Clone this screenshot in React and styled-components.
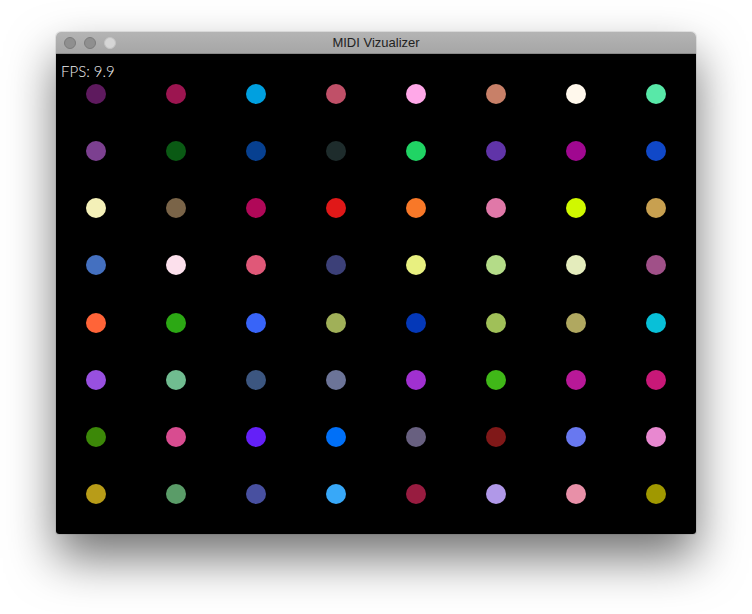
import React from 'react'
import styled, { createGlobalStyle } from 'styled-components'

const colors = [
  ['#5e1a5e', '#9c1550', '#00a0e0', '#c05068', '#ffa8e8', '#c88068', '#fff8ec', '#58e8a8'],
  ['#7c4090', '#0a5a14', '#074090', '#1e2c2c', '#20d464', '#6034a8', '#a00890', '#1048c8'],
  ['#f4f0b8', '#7a6448', '#b00858', '#e01818', '#f87828', '#e078a8', '#d0f800', '#c8a050'],
  ['#4470c0', '#fce0ec', '#e05878', '#3c4078', '#e8f080', '#b4dc88', '#e4ecbc', '#a05088'],
  ['#ff6438', '#2ca814', '#3864f8', '#a0b058', '#0438b8', '#a0c058', '#b0a860', '#08c0d8'],
  ['#9850e0', '#70bc90', '#3c5680', '#6c7498', '#a030d0', '#40b818', '#b81898', '#c81878'],
  ['#3c8808', '#d84c90', '#6420f8', '#0070f8', '#686080', '#801818', '#6878f0', '#e888d0'],
  ['#b89c18', '#5a9c68', '#4850a0', '#38a8f8', '#981c40', '#b098e8', '#e890a8', '#a09800'],
]

const GlobalStyle = createGlobalStyle`
  body {
    margin: 0;
    background: #fff;
    font-family: "Liberation Sans", Arial, sans-serif;
  }
`

const Desktop = styled.div`
  padding: 32px 56px 80px;
`

const Window = styled.div`
  width: 640px;
  border-radius: 5px 5px 3px 3px;
  overflow: hidden;
  box-shadow: 0 24px 48px rgba(0, 0, 0, 0.55), 0 0 0 1px rgba(0, 0, 0, 0.08);
`

const TitleBar = styled.div`
  position: relative;
  height: 22px;
  display: flex;
  align-items: center;
  justify-content: center;
  background: linear-gradient(#b4b4b4, #a6a6a6);
  border-bottom: 1px solid #8a8a8a;
  box-sizing: border-box;
`

const Lights = styled.div`
  position: absolute;
  left: 8px;
  top: 5px;
  display: flex;
  gap: 8px;
`

const Light = styled.span`
  width: 12px;
  height: 12px;
  border-radius: 50%;
  box-sizing: border-box;
  background: ${p => (p.$dim ? '#d6d6d6' : '#8f8f8f')};
  border: 1px solid ${p => (p.$dim ? '#c4c4c4' : '#7c7c7c')};
`

const Title = styled.div`
  font-size: 13px;
  color: #222;
`

const Canvas = styled.div`
  position: relative;
  height: 480px;
  background: #000;
  box-sizing: border-box;
  padding: 30px;
  display: grid;
  grid-template-columns: repeat(8, 20px);
  grid-template-rows: repeat(8, 20px);
  justify-content: space-between;
  align-content: space-between;
`

const Fps = styled.div`
  position: absolute;
  left: 5px;
  top: 8px;
  font-family: Lato, "Liberation Sans", sans-serif;
  font-weight: 300;
  font-size: 15px;
  color: #f0f0f0;
`

const Dot = styled.span`
  width: 20px;
  height: 20px;
  border-radius: 50%;
`

export default function App() {
  return (
    <Desktop>
      <GlobalStyle />
      <Window>
        <TitleBar>
          <Lights>
            <Light />
            <Light />
            <Light $dim />
          </Lights>
          <Title>MIDI Vizualizer</Title>
        </TitleBar>
        <Canvas>
          <Fps>FPS: 9.9</Fps>
          {colors.flat().map((c, i) => (
            <Dot key={i} style={{ background: c }} />
          ))}
        </Canvas>
      </Window>
    </Desktop>
  )
}
